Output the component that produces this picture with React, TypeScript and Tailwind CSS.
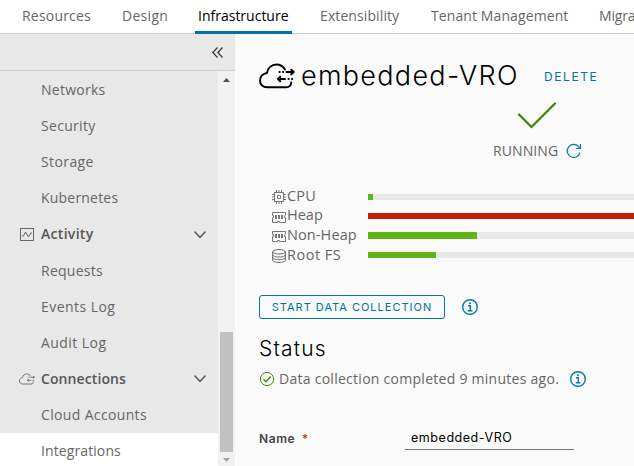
import type { ReactNode } from "react";

const CloudLink = ({ className, stroke }: { className: string; stroke: number }) => (
  <svg viewBox="0 0 36 26" className={className} fill="none" stroke="currentColor" strokeWidth={stroke} strokeLinecap="round" strokeLinejoin="round">
    <path d="M26 6.500C24 3.300 21 1.500 17.500 1.500C12.500 1.500 8.500 5 8 10C4 10.500 1 13.500 1 17.500C1 21.500 4 24.300 8 24.300H27C30 24.300 32 22.500 32.300 19.500" />
    <path d="M27.500 9H34.500M32.300 6.800L34.700 9L32.300 11.200M26 16H19M21.200 13.800L19 16L21.200 18.200" />
    <path d="M20.500 9H20.700M24 9H24.200M29.500 16H29.700M33 16H33.200" />
  </svg>
);

const Info = () => (
  <svg viewBox="0 0 16 16" className="size-4 text-[#0079ad]" fill="none" stroke="currentColor">
    <circle cx="8" cy="8" r="7.300" strokeWidth="1.400" />
    <path d="M6 6.800H8.300V11.600M5.700 11.700H10.500" strokeWidth="1.400" />
    <circle cx="8" cy="4.200" r="1" fill="currentColor" stroke="none" />
  </svg>
);

const Chip = () => (
  <svg viewBox="0 0 14 14" className="size-3.5 text-[#777]" fill="none" stroke="currentColor">
    <rect x="2.500" y="2.500" width="9" height="9" />
    <path d="M5.500 8.500V5.500H8.500V8.500H5.500M4.500 0V2M7 0V2M9.500 0V2M4.500 12V14M7 12V14M9.500 12V14M0 4.500H2M0 7H2M0 9.500H2M12 4.500H14M12 7H14M12 9.500H14" />
  </svg>
);

const Memory = () => (
  <svg viewBox="0 0 14 11" className="mt-[3px] h-[11px] w-3.5 text-[#777]" fill="none" stroke="currentColor">
    <path d="M13.500 3.500V.5H.5V3.500H1.500V5.500H.5V10.500H5.500V9.500H7.500V10.500H13.500V5.500H12.500V3.500" />
    <path d="M4 3V7M7 3V7M10 3V7" stroke="#555" strokeWidth="1.600" />
  </svg>
);

const Disk = () => (
  <svg viewBox="0 0 14 14" className="mt-0.5 size-3.5 text-[#666]" fill="none" stroke="currentColor">
    <ellipse cx="7" cy="2.800" rx="6.300" ry="2.200" />
    <path d="M.7 3V11.200C.7 12.400 3.400 13.500 7 13.500S13.300 12.400 13.300 11.200V3M.7 5.800C.7 7 3.400 8 7 8S13.300 7 13.300 5.800M.7 8.500C.7 9.700 3.400 10.700 7 10.700S13.300 9.700 13.300 8.500" />
  </svg>
);

const Chevron = () => (
  <svg viewBox="0 0 12 8" className="ml-auto mr-3 h-2 w-3" fill="none" stroke="#565656" strokeWidth="1.500" strokeLinecap="round">
    <path d="M1 1L6 6.500L11 1" />
  </svg>
);

const tabs = [
  { label: "Resources", cls: "w-[100px] tracking-[0.2px]" },
  { label: "Design", cls: "w-[76px] tracking-[0.3px]" },
  { label: "Infrastructure", cls: "w-[122px] tracking-[0px] text-black" },
  { label: "Extensibility", cls: "w-[111px] tracking-[0.1px]" },
  { label: "Tenant Management", cls: "w-[168px] tracking-[0.1px]" },
  { label: "Migra", cls: "w-[35px] tracking-[-0.2px]" },
];

const Item = ({ label, cls = "", text = "" }: { label: string; cls?: string; text?: string }) => (
  <div className={`flex h-9 shrink-0 items-center pb-0.5 pl-[41px] ${cls}`}>
    <span className={text}>{label}</span>
  </div>
);

const Group = ({ label, icon, cls, text }: { label: string; icon: ReactNode; cls: string; text: string }) => (
  <div className={`flex shrink-0 items-center font-semibold text-[#565656] ${cls}`}>
    <span className="flex w-[41px] shrink-0 pl-[19px]">{icon}</span>
    <span className={`pb-0.5 ${text}`}>{label}</span>
    <Chevron />
  </div>
);

const meters = [
  { label: "CPU", icon: <Chip />, row: "h-[19px]", bar: "h-1.5", fill: "w-[5px] bg-[#60b515]", cls: "tracking-[0.2px]" },
  { label: "Heap", icon: <Memory />, row: "h-[19px]", bar: "h-1.5", fill: "w-full bg-[#c21d00]", cls: "" },
  { label: "Non-Heap", icon: <Memory />, row: "h-5", bar: "h-[7px]", fill: "w-[109px] bg-[#60b515]", cls: "tracking-[0.1px]" },
  { label: "Root FS", icon: <Disk />, row: "h-5", bar: "h-1.5", fill: "w-[68px] bg-[#60b515]", cls: "tracking-[0.500px]" },
];

export default function App() {
  return (
    <div className="flex h-[466px] w-[634px] flex-col overflow-hidden bg-[#fafafa] font-['Open_Sans',sans-serif] text-[14px] text-[#666]">
      <header className="flex h-[34px] shrink-0 overflow-hidden border-b border-[#ccc] bg-white pl-[22px]">
        {tabs.map((t) => (
          <div key={t.label} className={`flex h-[31px] shrink-0 items-center whitespace-nowrap ${t.cls}`}>
            {t.label}
          </div>
        ))}
      </header>
      <div className="relative z-10 -mt-[3px] ml-[195px] h-[3px] w-[97px] shrink-0 bg-[#0072a3]" />
      <div className="flex min-h-0 flex-1">
        <aside className="flex w-[235px] shrink-0 flex-col bg-[#e8e8e8]">
          <div className="flex h-[37px] shrink-0 items-center justify-end border-b border-[#ccc] pr-[12px]">
            <svg viewBox="0 0 11 11" className="size-[11px]" fill="none" stroke="#333" strokeWidth="1.200">
              <path d="M5.500 .5L.8 5.500L5.500 10.500M10.500 .5L5.800 5.500L10.500 10.500" />
            </svg>
          </div>
          <div className="flex min-h-0 flex-1">
            <nav className="flex w-[218px] flex-col overflow-hidden pt-px">
              <Item label="Networks" text="tracking-[0.25px]" />
              <Item label="Security" text="tracking-[0.3px]" />
              <Item label="Storage" text="tracking-[0.4px]" />
              <Item label="Kubernetes" text="tracking-[0.2px]" />
              <Group
                label="Activity"
                cls="h-[37px]"
                text="tracking-[0.3px]"
                icon={
                  <svg viewBox="0 0 16 14" className="-mt-px h-3.5 w-4" fill="none" stroke="#666">
                    <rect x="1.500" y="1.500" width="13" height="12" />
                    <path d="M3 9H4.500L6.500 5L9.500 10L11.800 6H13" />
                  </svg>
                }
              />
              <Item label="Requests" text="tracking-[0.25px]" />
              <Item label="Events Log" text="tracking-[0.450px]" />
              <Item label="Audit Log" text="tracking-[0.450px]" />
              <Group label="Connections" cls="h-9" text="tracking-[0.1px]" icon={<CloudLink className="h-[12px] w-4 text-[#666]" stroke={2} />} />
              <Item label="Cloud Accounts" text="tracking-[0.35px]" />
              <Item label="Integrations" cls="bg-white" text="tracking-[0.1px]" />
            </nav>
            <div className="flex w-[17px] flex-col items-center bg-[#f1f1f1] pt-[7px]">
              <svg viewBox="0 0 7 4" className="h-1 w-[7px] shrink-0" fill="#505050"><path d="M3.500 0L7 4H0Z" /></svg>
              <div className="mt-[250px] h-[120px] w-[13px] shrink-0 bg-[#c1c1c1]" />
              <svg viewBox="0 0 7 4" className="mt-1.5 h-1 w-[7px] shrink-0" fill="#a3a3a3"><path d="M0 0H7L3.500 4Z" /></svg>
            </div>
          </div>
        </aside>
        <main className="flex min-w-0 flex-1 flex-col pl-6">
          <div className="mt-6 flex h-9 items-center whitespace-nowrap">
            <CloudLink className="h-[26px] w-9 text-black" stroke={2} />
            <h1 className="ml-1.5 w-[243px] font-['Inter',sans-serif] text-[27px] font-light tracking-[1.3px] text-black">embedded-VRO</h1>
            <span className="pt-0.5 font-['Inter',sans-serif] text-[12px] tracking-[1.600px] text-[#0072a3]">DELETE</span>
          </div>
          <svg viewBox="0 0 40 28" className="ml-[258px] mt-2 h-7 w-10 shrink-0" fill="none" stroke="#3c8500" strokeWidth="2.200" strokeLinecap="round">
            <path d="M2 12.500L14.500 25L38 1.500" />
          </svg>
          <div className="ml-[234px] mt-[11px] flex h-5 shrink-0 items-center">
            <span className="w-[73px] pb-0.5 tracking-[0.1px]">RUNNING</span>
            <svg viewBox="0 0 16 16" className="size-4" fill="none" stroke="#0079ad" strokeWidth="1.200">
              <path d="M14 9.500A6.500 6.500 0 1 1 12.500 3.500L14 5.200M14.500 1V5.500H10" />
            </svg>
          </div>
          <div className="ml-[13px] mt-[26px] flex shrink-0 flex-col">
            {meters.map((m) => (
              <div key={m.label} className={`flex shrink-0 items-center ${m.row}`}>
                <span className="flex w-[15px] shrink-0">{m.icon}</span>
                <span className={`w-[81px] shrink-0 whitespace-nowrap text-[14.500px] leading-none ${m.cls}`}>{m.label}</span>
                <div className={`flex-1 bg-[#e8e8e8] ${m.bar}`}>
                  <div className={`h-full ${m.fill}`} />
                </div>
              </div>
            ))}
          </div>
          <div className="mt-[30px] flex h-6 shrink-0 items-center">
            <button className="h-6 w-[186px] whitespace-nowrap rounded-[3px] border border-[#0072a3] font-['Inter',sans-serif] text-[11px] tracking-[1px] text-[#0072a3]">START DATA COLLECTION</button>
            <span className="ml-[17px]"><Info /></span>
          </div>
          <h2 className="mt-[15px] h-[30px] shrink-0 font-['Inter',sans-serif] text-[21px] font-light leading-[30px] tracking-[1.2px] text-black">Status</h2>
          <div className="mt-1 flex h-5 shrink-0 items-center whitespace-nowrap">
            <svg viewBox="0 0 16 16" className="mt-px size-4" fill="none" stroke="#3c8500">
              <circle cx="8" cy="8" r="6.600" />
              <path d="M4.500 8.200L7 10.700L11.700 5.500" strokeWidth="1.300" />
            </svg>
            <span className="ml-1 w-[291px] tracking-[0.27px]">Data collection completed 9 minutes ago.</span>
            <span className="mt-px"><Info /></span>
          </div>
          <div className="mt-[38px] flex h-[24px] shrink-0">
            <label className="w-[146px] pt-[3px] font-['Inter',sans-serif] text-[12px] font-semibold leading-5 tracking-[0.6px] text-[#454545]">
              Name <span className="ml-[3px] font-normal text-[#c21d00]">*</span>
            </label>
            <div className="w-[169px] border-b border-[#6a7a81] pl-1.5 pt-px font-['Inter',sans-serif] text-[12.500px] leading-[22px] tracking-[0.550px] text-black">embedded-VRO</div>
          </div>
        </main>
      </div>
    </div>
  );
}
